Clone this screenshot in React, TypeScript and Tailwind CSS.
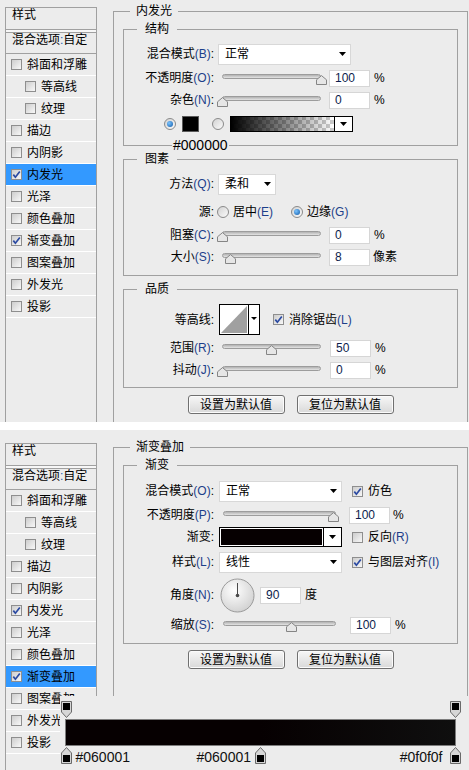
import React from "react";

type Item = { label: string; indent?: boolean };

const styleItems: Item[] = [
  { label: "斜面和浮雕" },
  { label: "等高线", indent: true },
  { label: "纹理", indent: true },
  { label: "描边" },
  { label: "内阴影" },
  { label: "内发光" },
  { label: "光泽" },
  { label: "颜色叠加" },
  { label: "渐变叠加" },
  { label: "图案叠加" },
  { label: "外发光" },
  { label: "投影" },
];

function Key({ k }: { k: string }) {
  return <span className="text-[#1d3f8a]">({k})</span>;
}

function Lbl({ t, k }: { t: string; k?: string }) {
  return (
    <>
      {t}
      {k && <Key k={k} />}:
    </>
  );
}

function Tri() {
  return (
    <svg width="7" height="4" viewBox="0 0 7 4" className="shrink-0">
      <path d="M0 0H7L3.5 4Z" fill="#000" />
    </svg>
  );
}

function CheckBox({ checked, className = "" }: { checked?: boolean; className?: string }) {
  return (
    <span
      className={`flex items-center justify-center w-[11px] h-[11px] shrink-0 border border-[#8e8e8e] bg-linear-to-br from-[#cdcdcd] to-[#f8f8f8] ${className}`}
    >
      {checked && (
        <svg width="9" height="9" viewBox="0 0 9 9">
          <path d="M1.3 4.6 L3.4 7.2 L7.8 1.4" fill="none" stroke="#2b4aa2" strokeWidth="1.7" />
        </svg>
      )}
    </span>
  );
}

function Radio({ on }: { on?: boolean }) {
  return (
    <span className="flex items-center justify-center w-[12px] h-[12px] shrink-0 rounded-full border border-[#8a8a8a] bg-linear-to-br from-[#d2d2d2] to-[#fbfbfb]">
      {on && <span className="w-[6px] h-[6px] rounded-full bg-radial-[at_35%_35%] from-[#7cc4ff] to-[#0f5aa8]" />}
    </span>
  );
}

function Select({ text, w }: { text: string; w: string }) {
  return (
    <div className={`h-[21px] flex items-center justify-between bg-white border border-[#d8d8d8] pl-[6px] pr-[4px] ${w}`}>
      <span>{text}</span>
      <Tri />
    </div>
  );
}

function Num({ v, className = "" }: { v: string; className?: string }) {
  return (
    <div className={`h-[17px] w-[41px] bg-white border border-[#d6d6d6] pl-[5px] leading-[15px] text-[#0d1d4d] ${className}`}>
      {v}
    </div>
  );
}

function Slider({ pct, wide }: { pct: number; wide?: boolean }) {
  const box = wide ? "w-[124px]" : "w-[108px]";
  const track = wide ? "left-[5px] right-[6px]" : "left-[4px] right-[5px]";
  return (
    <div className={`relative h-[16px] shrink-0 ${box}`}>
      <div className={`absolute top-[4px] h-[5px] rounded-full border border-[#9c9c9c] bg-linear-to-b from-[#b2b2b2] to-[#e4e4e4] ${track}`} />
      <div className={`absolute top-[5px] h-[10px] ${track}`}>
        <svg
          width="11"
          height="10"
          viewBox="0 0 11 10"
          className="absolute top-0"
          style={{ left: `calc(${pct}% - 5.5px)` }}
        >
          <path d="M0.5 9.5 V4.8 L5.5 0.6 L10.5 4.8 V9.5 Z" fill="#e6e6e6" stroke="#858585" />
        </svg>
      </div>
    </div>
  );
}

function Row({
  label,
  className = "h-[22px]",
  children,
}: {
  label?: React.ReactNode;
  className?: string;
  children: React.ReactNode;
}) {
  return (
    <div className={`flex items-center ${className}`}>
      <div className="w-[90px] shrink-0 text-right whitespace-nowrap">{label}</div>
      <div className="ml-[4px] flex items-center">{children}</div>
    </div>
  );
}

function StylePanel({ selected, checked }: { selected: string; checked: string[] }) {
  return (
    <div className="ml-[5px] w-[92px] h-[440px] shrink-0 border border-[#a0a0a0]">
      <div className="h-[22px] border-b border-[#a0a0a0] pl-[6px] leading-[15px]">样式</div>
      <div className="h-[2px] bg-[#f7f7f7]" />
      <div className="h-[22px] border-t border-b border-[#a0a0a0] pl-[6px] leading-[14px] whitespace-nowrap">
        混合选项<span className="text-[#1d5fb0]">:</span>自定
      </div>
      {styleItems.map((it) => (
        <div
          key={it.label}
          className={`h-[22px] flex items-center border-b border-white whitespace-nowrap ${
            it.label === selected ? "bg-[#3399ff]" : ""
          }`}
        >
          <CheckBox checked={checked.includes(it.label)} className={it.indent ? "ml-[19px]" : "ml-[5px]"} />
          <span className="ml-[5px]">{it.label}</span>
        </div>
      ))}
    </div>
  );
}

function FadeSwatch() {
  return (
    <svg width="123" height="16" viewBox="0 0 123 16" className="ml-[6px] shrink-0">
      <defs>
        <pattern id="chk" width="8" height="8" patternUnits="userSpaceOnUse">
          <rect width="8" height="8" fill="#ffffff" />
          <rect width="4" height="4" fill="#cccccc" />
          <rect x="4" y="4" width="4" height="4" fill="#cccccc" />
        </pattern>
        <linearGradient id="fade" x1="0" x2="1" y1="0" y2="0">
          <stop offset="0" stopColor="#000" stopOpacity="1" />
          <stop offset="1" stopColor="#000" stopOpacity="0" />
        </linearGradient>
      </defs>
      <rect x="0.5" y="0.5" width="122" height="15" fill="#fff" stroke="#000" />
      <rect x="1" y="1" width="103" height="14" fill="url(#chk)" />
      <rect x="1" y="1" width="103" height="14" fill="url(#fade)" />
      <line x1="104.5" y1="0" x2="104.5" y2="16" stroke="#000" />
      <path d="M110 6H117L113.5 10Z" fill="#000" />
    </svg>
  );
}

function ContourBox() {
  return (
    <svg width="41" height="31" viewBox="0 0 41 31" className="ml-[1px] shrink-0">
      <rect x="0.5" y="0.5" width="40" height="30" fill="#fff" stroke="#000" />
      <path d="M2 29 L28 2 L28 29 Z" fill="#a0a0a0" />
      <line x1="29.5" y1="0" x2="29.5" y2="31" stroke="#000" />
      <path d="M32 13H38L35 16Z" fill="#000" />
    </svg>
  );
}

function Dial() {
  return (
    <svg width="35" height="35" viewBox="0 0 35 35" className="ml-[2px] shrink-0">
      <defs>
        <radialGradient id="dialg" cx="40%" cy="35%" r="70%">
          <stop offset="0" stopColor="#ffffff" />
          <stop offset="1" stopColor="#d0d0d0" />
        </radialGradient>
      </defs>
      <circle cx="17.5" cy="17.5" r="16.5" fill="url(#dialg)" stroke="#9a9a9a" />
      <line x1="17.5" y1="17.5" x2="17.5" y2="5" stroke="#4a4a4a" strokeWidth="1" />
      <circle cx="17.5" cy="17.5" r="1.8" fill="#4a4a4a" />
    </svg>
  );
}

function Btn({ children }: { children: React.ReactNode }) {
  return (
    <button
      type="button"
      className="h-[19px] w-[97px] rounded-[3px] border border-[#707070] bg-linear-to-b from-[#f7f7f7] to-[#d9d9d9] shadow-[inset_0_0_0_1px_#fbfbfb] flex items-center justify-center leading-[14px]"
    >
      {children}
    </button>
  );
}

function Buttons({ className }: { className: string }) {
  return (
    <div className={`flex justify-center gap-[12px] ${className}`}>
      <Btn>设置为默认值</Btn>
      <Btn>复位为默认值</Btn>
    </div>
  );
}

function InnerGlowDialog() {
  return (
    <div className="h-[422px] bg-[#ececec] overflow-hidden flex items-start">
      <div className="mt-[7px]">
        <StylePanel selected="内发光" checked={["内发光", "渐变叠加"]} />
      </div>
      <fieldset className="ml-[16px] mt-[4px] w-[355px] h-[440px] shrink-0 border border-[#a0a0a0]">
        <legend className="ml-[16px] px-[6px] leading-[14px]">内发光</legend>

        <fieldset className="ml-[9px] mt-[4px] w-[335px] border border-[#a0a0a0] pt-[7px] pb-[10px]">
          <legend className="ml-[13px] px-[8px] leading-[14px]">结构</legend>
          <Row label={<Lbl t="混合模式" k="B" />}>
            <Select text="正常" w="w-[133px]" />
          </Row>
          <Row className="h-[22px] mt-[2px]" label={<Lbl t="不透明度" k="O" />}>
            <Slider pct={100} />
            <Num v="100" className="ml-[3px]" />
            <span className="ml-[4px]">%</span>
          </Row>
          <Row label={<Lbl t="杂色" k="N" />}>
            <Slider pct={0} />
            <Num v="0" className="ml-[3px]" />
            <span className="ml-[4px]">%</span>
          </Row>
          <div className="relative mt-[2px] h-[22px] flex items-center pl-[40px]">
            <Radio on />
            <div className="ml-[6px] w-[17px] h-[16px] bg-black border border-[#5a5a5a]" />
            <div className="ml-[13px]">
              <Radio />
            </div>
            <FadeSwatch />
            <span className="absolute left-[48px] top-[25px] px-[1px] bg-[#ececec] text-[14px] leading-[14px]">#000000</span>
          </div>
        </fieldset>

        <fieldset className="ml-[9px] mt-[6px] w-[335px] border border-[#a0a0a0] pt-[7px] pb-[7px]">
          <legend className="ml-[13px] px-[8px] leading-[14px]">图素</legend>
          <Row label={<Lbl t="方法" k="Q" />}>
            <Select text="柔和" w="w-[58px]" />
          </Row>
          <Row className="h-[22px] mt-[6px]" label="源:">
            <div className="-ml-[1px] flex items-center">
              <Radio />
              <span className="ml-[4px]">
                居中<Key k="E" />
              </span>
              <div className="ml-[18px]">
                <Radio on />
              </div>
              <span className="ml-[4px]">
                边缘<Key k="G" />
              </span>
            </div>
          </Row>
          <Row className="h-[22px] mt-[1px]" label={<Lbl t="阻塞" k="C" />}>
            <Slider pct={0} />
            <Num v="0" className="ml-[3px]" />
            <span className="ml-[4px]">%</span>
          </Row>
          <Row label={<Lbl t="大小" k="S" />}>
            <Slider pct={8.6} />
            <Num v="8" className="ml-[3px]" />
            <span className="ml-[3px]">像素</span>
          </Row>
        </fieldset>

        <fieldset className="ml-[9px] mt-[6px] w-[335px] border border-[#a0a0a0] pt-[8px] pb-[6px]">
          <legend className="ml-[13px] px-[8px] leading-[14px]">品质</legend>
          <Row className="h-[31px]" label="等高线:">
            <ContourBox />
            <CheckBox checked className="ml-[13px]" />
            <span className="ml-[5px]">
              消除锯齿<Key k="L" />
            </span>
          </Row>
          <Row className="h-[22px] mt-[2px]" label={<Lbl t="范围" k="R" />}>
            <Slider pct={49.5} />
            <Num v="50" className="ml-[4px]" />
            <span className="ml-[4px]">%</span>
          </Row>
          <Row label={<Lbl t="抖动" k="J" />}>
            <Slider pct={0} />
            <Num v="0" className="ml-[4px]" />
            <span className="ml-[4px]">%</span>
          </Row>
        </fieldset>

        <Buttons className="mt-[7px]" />
      </fieldset>
    </div>
  );
}

type Stop = { loc: number; label: string; labelPos: string };

const colorStops: Stop[] = [
  { loc: 0, label: "#060001", labelPos: "left-[15px]" },
  { loc: 50, label: "#060001", labelPos: "right-[15px]" },
  { loc: 100, label: "#0f0f0f", labelPos: "right-[18px]" },
];
const colorValues = ["#060001", "#060001", "#0f0f0f"];
const opacityStops = [0, 100];

function TopStop() {
  return (
    <svg width="11" height="17" viewBox="0 0 11 17">
      <path d="M0.5 0.5 H10.5 V11 L5.5 16.5 L0.5 11 Z" fill="#d6d6d6" stroke="#6a6a6a" />
      <rect x="2" y="2" width="7" height="7" fill="#000" />
    </svg>
  );
}

function BottomStop() {
  return (
    <svg width="11" height="17" viewBox="0 0 11 17">
      <path d="M5.5 0.5 L10.5 6 V16.5 H0.5 V6 Z" fill="#d6d6d6" stroke="#6a6a6a" />
      <rect x="2" y="8" width="7" height="7" fill="#000" />
    </svg>
  );
}

function GradientEditor() {
  const fill = `linear-gradient(to right, ${colorStops
    .map((s, i) => `${colorValues[i]} ${s.loc}%`)
    .join(", ")})`;
  return (
    <div className="absolute left-[60px] top-[266px] right-0 bottom-0 bg-[#ececec] font-['Liberation_Sans',sans-serif]">
      <div className="ml-[5px] mt-[5px] w-[391px]">
        <div className="relative h-[17px] mx-[1px]">
          {opacityStops.map((loc) => (
            <div key={loc} className="absolute top-0 w-[11px]" style={{ left: `calc(${loc}% - 5.5px)` }}>
              <TopStop />
            </div>
          ))}
        </div>
        <div className="mt-[1px] h-[27px] border border-[#7d7d7d]" style={{ background: fill }} />
        <div className="relative mt-[1px] h-[17px] mx-[1px]">
          {colorStops.map((s) => (
            <div key={s.loc} className="absolute top-0 w-[11px]" style={{ left: `calc(${s.loc}% - 5.5px)` }}>
              <BottomStop />
              <span className={`absolute top-[2px] text-[14px] leading-[16px] text-[#111] whitespace-nowrap ${s.labelPos}`}>
                {s.label}
              </span>
            </div>
          ))}
        </div>
      </div>
    </div>
  );
}

function GradientDialog() {
  return (
    <div className="relative h-[340px] bg-[#ececec] overflow-hidden flex items-start">
      <div className="mt-[13px]">
        <StylePanel selected="渐变叠加" checked={["内发光", "渐变叠加"]} />
      </div>
      <fieldset className="ml-[16px] mt-[10px] w-[355px] h-[340px] shrink-0 border border-[#a0a0a0]">
        <legend className="ml-[16px] px-[6px] leading-[14px]">渐变叠加</legend>

        <fieldset className="ml-[9px] mt-[4px] w-[335px] border border-[#a0a0a0] pt-[8px] pb-[7px]">
          <legend className="ml-[13px] px-[8px] leading-[14px]">渐变</legend>
          <Row label={<Lbl t="混合模式" k="O" />}>
            <div className="ml-[1px]">
              <Select text="正常" w="w-[123px]" />
            </div>
            <CheckBox checked className="ml-[10px]" />
            <span className="ml-[5px]">仿色</span>
          </Row>
          <Row className="h-[22px] mt-[2px]" label={<Lbl t="不透明度" k="P" />}>
            <Slider pct={98} wide />
            <Num v="100" className="ml-[7px]" />
            <span className="ml-[3px]">%</span>
          </Row>
          <Row label="渐变:">
            <div className="ml-[1px] flex w-[123px] h-[20px] border border-black bg-white">
              <div className="flex-1 border border-white bg-[#060001]" />
              <div className="w-[18px] border-l border-black flex items-center justify-center">
                <Tri />
              </div>
            </div>
            <CheckBox className="ml-[10px]" />
            <span className="ml-[5px]">
              反向<Key k="R" />
            </span>
          </Row>
          <Row className="h-[22px] mt-[3px]" label={<Lbl t="样式" k="L" />}>
            <div className="ml-[1px]">
              <Select text="线性" w="w-[123px]" />
            </div>
            <CheckBox checked className="ml-[10px]" />
            <span className="ml-[5px]">
              与图层对齐<Key k="I" />
            </span>
          </Row>
          <Row className="h-[34px] mt-[5px]" label={<Lbl t="角度" k="N" />}>
            <Dial />
            <Num v="90" className="ml-[5px]" />
            <span className="ml-[4px]">度</span>
          </Row>
          <Row className="h-[22px] mt-[2px]" label={<Lbl t="缩放" k="S" />}>
            <Slider pct={61} wide />
            <Num v="100" className="ml-[8px]" />
            <span className="ml-[4px]">%</span>
          </Row>
        </fieldset>

        <Buttons className="mt-[6px]" />
      </fieldset>
      <GradientEditor />
    </div>
  );
}

export default function App() {
  return (
    <div className="w-[469px] h-[770px] overflow-hidden bg-white text-black text-[12px] leading-[14px] font-['Liberation_Sans','Noto_Sans_CJK_SC',sans-serif]">
      <InnerGlowDialog />
      <div className="h-[8px] bg-white" />
      <GradientDialog />
    </div>
  );
}
